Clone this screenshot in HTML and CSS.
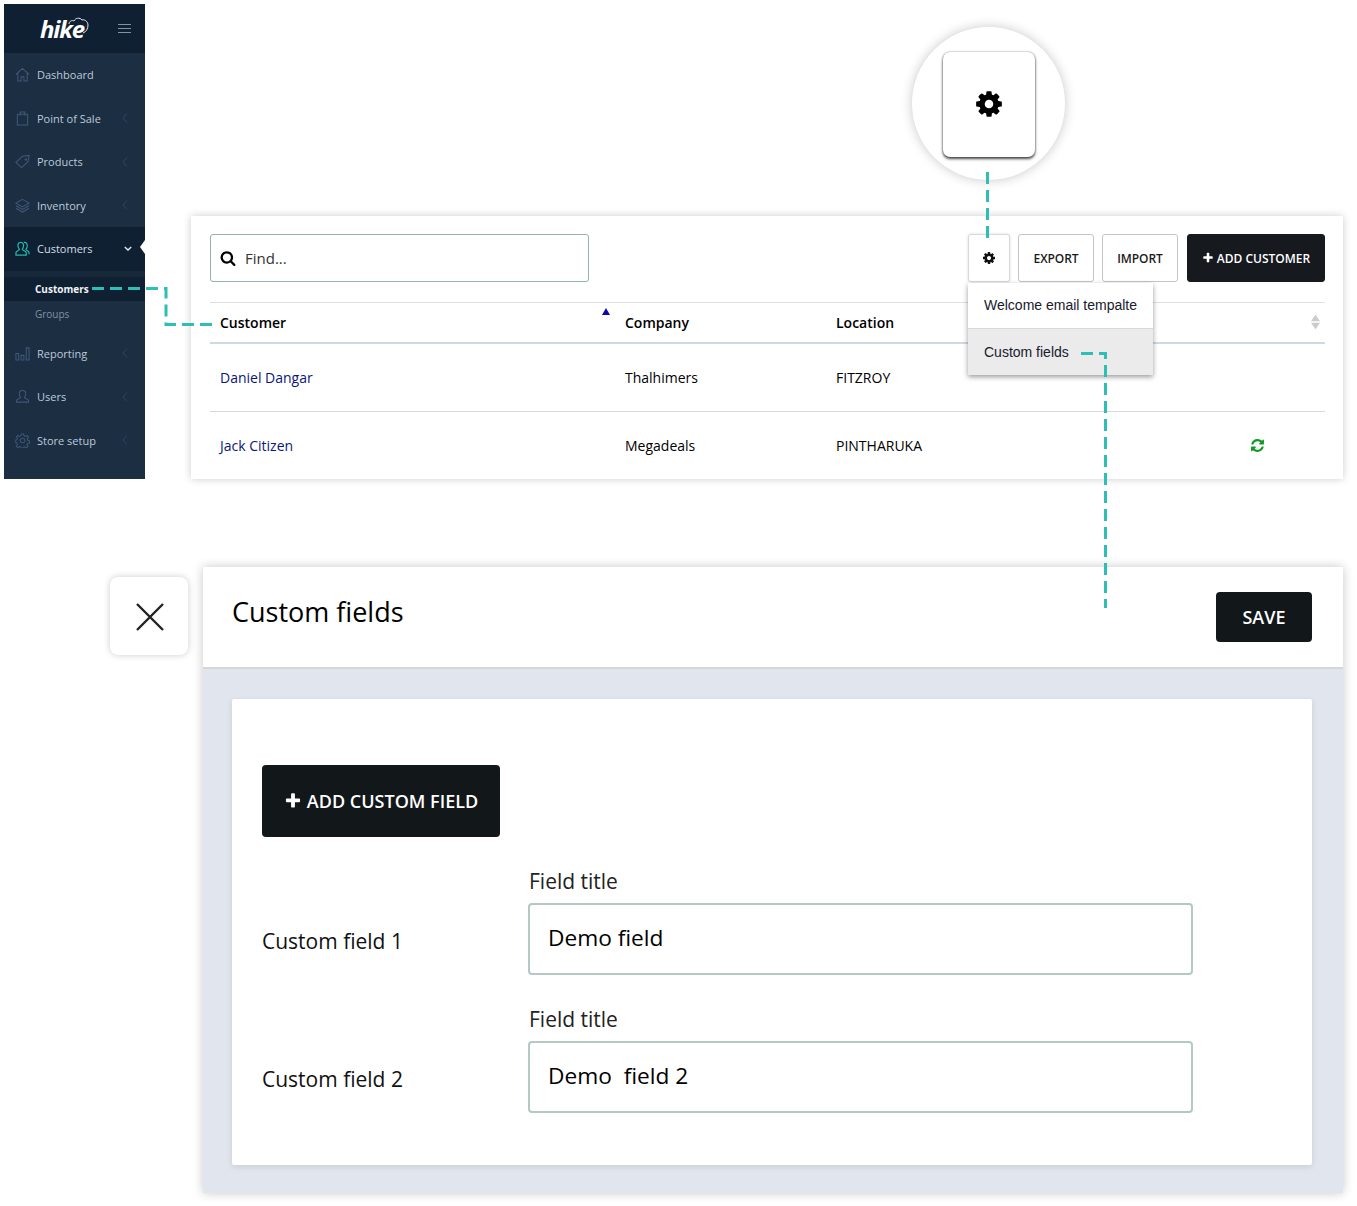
FILE: index.html
```html
<!DOCTYPE html>
<html lang="en">
<head>
    <meta charset="UTF-8">
    <meta name="viewport" content="width=device-width, initial-scale=1.0">
    <title>Custom fields</title>
    <link rel="stylesheet" href="styles.css">
</head>
<body>
    <svg class="defs" width="0" height="0">
        <symbol id="i-cog" viewBox="0 0 1792 1792"><path d="M1152 896q0-106-75-181t-181-75-181 75-75 181 75 181 181 75 181-75 75-181zm512-109v222q0 12-8 23t-20 13l-185 28q-19 54-39 91 35 50 107 138 10 12 10 25t-9 23q-27 37-99 108t-94 71q-12 0-26-9l-138-108q-44 23-91 38-16 136-29 186-7 28-36 28h-222q-14 0-24.500-8.500t-11.500-21.500l-28-184q-49-16-90-37l-141 107q-10 9-25 9-14 0-25-11-126-114-165-168-7-10-7-23 0-12 8-23 15-21 51-66.500t54-70.500q-27-50-41-99l-183-27q-13-2-21-12.500t-8-23.500v-222q0-12 8-23t19-13l186-28q14-46 39-92-40-57-107-138-10-12-10-24 0-10 9-23 26-36 98.500-107.500t94.500-71.500q13 0 26 10l138 107q44-23 91-38 16-136 29-186 7-28 36-28h222q14 0 24.500 8.500t11.500 21.500l28 184q49 16 90 37l142-107q9-9 24-9 13 0 25 10 129 119 165 170 7 8 7 22 0 12-8 23-15 21-51 66.500t-54 70.500q26 50 41 98l183 28q13 2 21 12.500t8 23.500z"/></symbol>
        <symbol id="i-search" viewBox="0 0 1792 1792"><path d="M1216 832q0-185-131.500-316.500t-316.500-131.500-316.500 131.500-131.500 316.500 131.500 316.500 316.500 131.500 316.500-131.500 131.500-316.500zm512 832q0 52-38 90t-90 38q-54 0-90-38l-343-342q-179 124-399 124-143 0-273.500-55.500t-225-150-150-225-55.500-273.500 55.500-273.500 150-225 225-150 273.500-55.500 273.500 55.500 225 150 150 225 55.500 273.500q0 220-124 399l343 343q37 37 37 90z"/></symbol>
        <symbol id="i-refresh" viewBox="0 0 1792 1792"><path d="M1639 1056q0 5-1 7-64 268-268 434.500t-478 166.500q-146 0-282.500-55t-243.500-157l-129 129q-19 19-45 19t-45-19-19-45v-448q0-26 19-45t45-19h448q26 0 45 19t19 45-19 45l-137 137q71 66 161 102t187 36q134 0 250-65t186-179q11-17 53-117 8-23 30-23h192q13 0 22.500 9.500t9.500 22.500zm25-800v448q0 26-19 45t-45 19h-448q-26 0-45-19t-19-45 19-45l138-138q-148-137-349-137-134 0-250 65t-186 179q-11 17-53 117-8 23-30 23h-199q-13 0-22.500-9.500t-9.500-22.500v-7q65-268 270-434.500t480-166.500q146 0 284 55.500t245 156.500l130-129q19-19 45-19t45 19 19 45z"/></symbol>
        <symbol id="i-plus" viewBox="0 0 1792 1792"><path d="M1600 736v192q0 40-28 68t-68 28h-416v416q0 40-28 68t-68 28h-192q-40 0-68-28t-28-68v-416h-416q-40 0-68-28t-28-68v-192q0-40 28-68t68-28h416v-416q0-40 28-68t68-28h192q40 0 68 28t28 68v416h416q40 0 68 28t28 68z"/></symbol>
        <symbol id="i-left" viewBox="0 0 8 12"><path d="M6 1.500 2 6l4 4.500" fill="none" stroke="currentColor" stroke-width="1"/></symbol>
    </svg>

    <!-- sidebar -->
    <nav class="sidebar">
        <div class="side-head">
            <div class="logo">
                <span class="logo-text">hike</span>
                <svg class="logo-cloud" viewBox="0 0 24 20" width="24" height="20"><path d="M3 9c0-3 3-4 5-3 1-3 6-4 8-1 3-1 6 2 6 5 0 4-2 7-5 8" fill="none" stroke="#dfe5ea" stroke-width="1"/></svg>
            </div>
            <div class="burger"><span></span><span></span><span></span></div>
        </div>
        <a class="nav-item">
            <svg class="nav-icon" viewBox="0 0 16 16"><path d="M1 8 8 1.500 15 8M3 6.500V15h3.500v-4.500h3V15H13V6.500"/></svg>
            <span class="nav-label">Dashboard</span>
        </a>
        <a class="nav-item">
            <svg class="nav-icon" viewBox="0 0 16 16"><path d="M2.500 3.500h11V15h-11zM5.500 5V1h5v4"/></svg>
            <span class="nav-label">Point of Sale</span>
            <svg class="nav-arrow"><use href="#i-left"/></svg>
        </a>
        <a class="nav-item">
            <svg class="nav-icon" viewBox="0 0 16 16"><path d="M1 9 8 2.500l7-1-1 6.500-7 6.500zM11.500 5a.8.8 0 1 0 .1 0"/></svg>
            <span class="nav-label">Products</span>
            <svg class="nav-arrow"><use href="#i-left"/></svg>
        </a>
        <a class="nav-item">
            <svg class="nav-icon" viewBox="0 0 16 16"><path d="M8 1.500 15 5.500 8 9.500 1 5.500zM1 8.200l7 4 7-4M1 11l7 4 7-4"/></svg>
            <span class="nav-label">Inventory</span>
            <svg class="nav-arrow"><use href="#i-left"/></svg>
        </a>
        <a class="nav-item active">
            <svg class="nav-icon" viewBox="0 0 16 16"><path d="M6 1.500c2.500 0 3.500 2 3 4.500-.3 1.500-1 2.500-1.300 3 .3 1 4.300 1.500 4.300 3.500V15H1v-2.500c0-2 3.500-2.500 3.800-3.500C4.500 8.500 3.500 7.500 3.300 6 2.800 3.500 3.500 1.500 6 1.500zM9.500 1.500c2.500-.5 4 1.500 3.500 4.500-.2 1.500-1 2.500-1.300 3 .3 1 3.300 1.500 3.300 3.500V14"/></svg>
            <span class="nav-label">Customers</span>
            <svg class="nav-down" viewBox="0 0 10 6"><path d="M1 1l4 4 4-4"/></svg>
            <span class="nav-notch"></span>
        </a>
        <div class="subnav">
            <a class="sub-item current">Customers</a>
            <a class="sub-item">Groups</a>
        </div>
        <a class="nav-item">
            <svg class="nav-icon" viewBox="0 0 16 16"><path d="M1 8h3v7H1zM6.500 10h3v5h-3zM12 2h3v13h-3z"/></svg>
            <span class="nav-label">Reporting</span>
            <svg class="nav-arrow"><use href="#i-left"/></svg>
        </a>
        <a class="nav-item">
            <svg class="nav-icon" viewBox="0 0 16 16"><path d="M8 1.500c2.800 0 3.800 2 3.300 4.500-.3 1.500-1 2.500-1.300 3 .3 1 4.500 1.500 4.500 3.500V14h-13v-1.500C1.500 10.500 5.700 10 6 9c-.3-.5-1-1.500-1.300-3C4.200 3.500 5.200 1.500 8 1.500z"/></svg>
            <span class="nav-label">Users</span>
            <svg class="nav-arrow"><use href="#i-left"/></svg>
        </a>
        <a class="nav-item">
            <svg class="nav-icon" viewBox="0 0 16 16"><path d="M8 5.500a2.500 2.500 0 1 0 .1 0zM6.800 1h2.400l.4 2 1.500.7 1.800-1 1.500 1.800-1.200 1.700.4 1.600 1.900.6v2.300l-2 .4-.7 1.500 1 1.800-1.800 1.500-1.600-1.200-1.700.5-.5 1.800H6.800l-.5-1.900-1.600-.6-1.700 1.100-1.600-1.700 1.100-1.700-.6-1.600-1.900-.4V7.800l2-.5.6-1.500-1.100-1.700L3 2.500l1.700 1.100 1.600-.7z"/></svg>
            <span class="nav-label">Store setup</span>
            <svg class="nav-arrow"><use href="#i-left"/></svg>
        </a>
    </nav>

    <!-- customers panel -->
    <section class="panel">
        <div class="toolbar">
            <label class="find">
                <svg class="find-icon"><use href="#i-search"/></svg>
                <span>Find...</span>
            </label>
            <div class="actions">
                <button class="btn btn-cog"><svg><use href="#i-cog"/></svg></button>
                <button class="btn">EXPORT</button>
                <button class="btn">IMPORT</button>
                <button class="btn btn-dark"><svg><use href="#i-plus"/></svg>ADD CUSTOMER</button>
            </div>
        </div>
        <div class="row row-head">
            <div class="cell cell-name">Customer<span class="sort-up"></span></div>
            <div class="cell">Company</div>
            <div class="cell">Location</div>
            <div class="cell cell-end"><span class="sort-both"></span></div>
        </div>
        <div class="row row-body">
            <div class="cell cell-name"><a>Daniel Dangar</a></div>
            <div class="cell">Thalhimers</div>
            <div class="cell">FITZROY</div>
            <div class="cell cell-end"></div>
        </div>
        <div class="row row-body last">
            <div class="cell cell-name"><a>Jack Citizen</a></div>
            <div class="cell">Megadeals</div>
            <div class="cell">PINTHARUKA</div>
            <div class="cell cell-end"><svg class="sync"><use href="#i-refresh"/></svg></div>
        </div>
        <ul class="menu">
            <li>Welcome email tempalte</li>
            <li class="hover">Custom fields</li>
        </ul>
    </section>

    <!-- zoomed settings button -->
    <div class="lens">
        <div class="lens-btn"><svg><use href="#i-cog"/></svg></div>
    </div>

    <!-- custom fields modal -->
    <button class="close">
        <svg viewBox="0 0 28 28" width="28" height="28"><path d="M1 1l26 26M27 1 1 27"/></svg>
    </button>
    <section class="modal">
        <header class="modal-head">
            <h1>Custom fields</h1>
            <button class="btn-save">SAVE</button>
        </header>
        <div class="modal-body">
            <div class="card">
                <button class="btn-add"><svg><use href="#i-plus"/></svg>ADD CUSTOM FIELD</button>
                <div class="field">
                    <div class="field-name">Custom field 1</div>
                    <div class="field-main">
                        <div class="field-label">Field title</div>
                        <div class="field-input">Demo field</div>
                    </div>
                </div>
                <div class="field">
                    <div class="field-name">Custom field 2</div>
                    <div class="field-main">
                        <div class="field-label">Field title</div>
                        <div class="field-input">Demo&nbsp; field 2</div>
                    </div>
                </div>
            </div>
        </div>
    </section>

    <!-- dashed connectors -->
    <svg class="links" width="1357" height="1206">
        <path d="M92 288.500H166V324.500H212"/>
        <path d="M987.500 172V238"/>
        <path d="M1081 353.500H1105.500V608"/>
    </svg>
</body>
</html>
```

FILE: styles.css
```css
* {
    box-sizing: border-box;
}
html, body {
    margin: 0;
    padding: 0;
}
body {
    position: relative;
    width: 1357px;
    height: 1206px;
    overflow: hidden;
    background: #fff;
    font-family: "Open Sans", "Noto Sans", sans-serif;
    color: #111;
}
button {
    font-family: inherit;
    cursor: pointer;
}
.defs {
    position: absolute;
}

/* sidebar */
.sidebar {
    position: absolute;
    left: 4px;
    top: 4px;
    width: 141px;
    height: 475px;
    background: #1b2e42;
    color: #bccadb;
    font-size: 11px;
    display: flex;
    flex-direction: column;
}
.side-head {
    height: 49px;
    flex: none;
    background: #0f2032;
    display: flex;
    align-items: center;
    padding: 0 14px 0 36px;
    justify-content: space-between;
}
.logo {
    position: relative;
    width: 50px;
    height: 30px;
}
.logo-text {
    font-style: italic;
    font-weight: 700;
    font-size: 24px;
    line-height: 30px;
    letter-spacing: -1.200px;
    color: #fff;
}
.logo-cloud {
    position: absolute;
    left: 26px;
    top: 1px;
}
.burger {
    width: 13px;
    display: flex;
    flex-direction: column;
    gap: 3px;
}
.burger span {
    height: 1px;
    background: #8492a0;
}
.nav-item {
    position: relative;
    height: 43.500px;
    flex: none;
    display: flex;
    align-items: center;
    padding: 0 16px 0 11px;
}
.nav-icon {
    width: 15px;
    height: 15px;
    margin-right: 7px;
    fill: none;
    stroke: #41577a;
    stroke-width: 1.100;
}
.nav-label {
    flex: 1;
}
.nav-arrow {
    width: 8px;
    height: 12px;
    color: #2f4560;
}
.nav-item.active {
    background: #0f2032;
    color: #d5dde5;
}
.nav-item.active .nav-icon {
    stroke: #1fb9a6;
    stroke-width: 1.300;
}
.nav-down {
    width: 8px;
    height: 5px;
    margin-right: -3px;
    fill: none;
    stroke: #e2e8ee;
    stroke-width: 1.700;
}
.nav-notch {
    position: absolute;
    right: 0;
    top: 13px;
    border: 7px solid transparent;
    border-right: 5px solid #fff;
    border-left: 0;
}
.subnav {
    flex: none;
    height: 61px;
    border-top: 6px solid #16283a;
    font-size: 10px;
}
.sub-item {
    display: block;
    height: 24px;
    line-height: 24px;
    padding-left: 31px;
    color: #8292a5;
}
.sub-item + .sub-item {
    margin-top: 1px;
}
.sub-item.current {
    background: #0f2032;
    color: #f0f3f6;
    font-weight: 700;
}

/* customers panel */
.panel {
    position: absolute;
    left: 191px;
    top: 216px;
    width: 1152px;
    height: 263px;
    background: #fff;
    box-shadow: 0 0 8px rgba(0, 0, 0, 0.2);
    padding: 18px 18px 0 19px;
    font-size: 14px;
}
.toolbar {
    display: flex;
    justify-content: space-between;
    height: 68px;
}
.find {
    width: 379px;
    height: 48px;
    border: 1px solid #94b3b0;
    border-radius: 3px;
    display: flex;
    align-items: center;
    padding-left: 9px;
    gap: 9px;
    color: #333;
    font-size: 15px;
}
.find-icon {
    width: 16px;
    height: 16px;
    fill: #000;
}
.actions {
    display: flex;
    gap: 8px;
}
.btn {
    height: 48px;
    width: 76px;
    padding: 0;
    background: #fff;
    border: 1px solid #c4c4c4;
    border-radius: 3px;
    font-size: 12px;
    font-weight: 600;
    letter-spacing: -0.100px;
    color: #1a1a1a;
}
.btn-cog {
    width: 42px;
    box-shadow: 0 0 3px rgba(0, 0, 0, 0.15);
    border-color: #d8d8d8;
}
.btn-cog svg {
    width: 14px;
    height: 14px;
    display: block;
    margin: 0 auto;
    fill: #111;
}
.btn-dark {
    width: 138px;
    margin-left: 1px;
    background: #16191e;
    border-color: #16191e;
    color: #fff;
    letter-spacing: 0;
    display: flex;
    align-items: center;
    justify-content: center;
    gap: 3px;
}
.btn-dark svg {
    width: 12px;
    height: 12px;
    fill: #fff;
}
.row {
    display: grid;
    grid-template-columns: 405px 211px 1fr 120px;
    align-items: center;
}
.row-head {
    height: 42px;
    border-top: 1px solid #dbe0e4;
    border-bottom: 2px solid #d0d8e2;
    font-weight: 600;
    color: #000;
}
.row-body {
    height: 68px;
    border-bottom: 1px solid #d3d9df;
    color: #000;
}
.row-body.last {
    height: 66px;
    border-bottom: 0;
}
.cell {
    position: relative;
    padding-left: 10px;
}
.cell-name a {
    color: #0a1678;
}
.cell-end {
    text-align: right;
}
.sort-up {
    position: absolute;
    right: 5px;
    top: -5px;
    border: 4px solid transparent;
    border-top: 0;
    border-bottom: 7px solid #0a0aa8;
}
.sort-both {
    position: absolute;
    right: 5px;
    top: -8px;
    width: 9px;
    height: 15px;
    background: #ccc;
    clip-path: polygon(50% 0, 100% 45%, 0 45%, 0 55%, 100% 55%, 50% 100%, 0 55%, 0 45%);
}
.sync {
    display: block;
    width: 15px;
    height: 15px;
    margin: 1px 60px 0 auto;
    fill: #0c9a1f;
}
.menu {
    position: absolute;
    left: 777px;
    top: 67px;
    width: 185px;
    margin: 0;
    padding: 0;
    list-style: none;
    background: #fff;
    box-shadow: 0 2px 5px rgba(0, 0, 0, 0.4);
    font-family: "Liberation Sans", Arial, sans-serif;
    font-size: 14px;
    color: #16202c;
}
.menu li {
    height: 45px;
    line-height: 44px;
    padding-left: 16px;
}
.menu li.hover {
    height: 47px;
    line-height: 46px;
    border-top: 1px solid #d8d8d8;
    background: #ebebeb;
}

/* zoomed button */
.lens {
    position: absolute;
    left: 912px;
    top: 27px;
    width: 153px;
    height: 153px;
    border-radius: 50%;
    background: #fff;
    box-shadow: 0 0 12px rgba(0, 0, 0, 0.22);
    display: flex;
    align-items: center;
    justify-content: center;
}
.lens-btn {
    width: 92px;
    height: 105px;
    background: #fff;
    border-radius: 7px;
    box-shadow: 0 2px 3px rgba(0, 0, 0, 0.7), 0 0 2px rgba(0, 0, 0, 0.45);
    display: flex;
    align-items: center;
    justify-content: center;
    margin: 1px 0 0 1px;
}
.lens-btn svg {
    width: 30px;
    height: 30px;
    fill: #000;
}

/* modal */
.close {
    position: absolute;
    left: 110px;
    top: 577px;
    width: 78px;
    height: 78px;
    padding: 2px 0 0 2px;
    border: 0;
    border-radius: 8px;
    background: #fff;
    box-shadow: 0 0 7px rgba(0, 0, 0, 0.2);
    display: flex;
    align-items: center;
    justify-content: center;
}
.close svg {
    fill: none;
    stroke: #222;
    stroke-width: 2.400;
}
.modal {
    position: absolute;
    left: 203px;
    top: 567px;
    width: 1140px;
    height: 626px;
    background: #e1e5ed;
    box-shadow: 0 0 10px rgba(0, 0, 0, 0.22);
    display: flex;
    flex-direction: column;
}
.modal-head {
    height: 102px;
    flex: none;
    background: #fff;
    border-bottom: 2px solid #d6d6d6;
    display: flex;
    align-items: flex-start;
    justify-content: space-between;
    padding: 25px 31px 0 29px;
}
.modal-head h1 {
    margin: 0;
    font-size: 27px;
    font-weight: 400;
    line-height: 40px;
    color: #000;
}
.btn-save {
    width: 96px;
    height: 50px;
    background: #12171a;
    color: #fff;
    border: 0;
    border-radius: 4px;
    font-size: 18px;
    font-weight: 600;
}
.modal-body {
    padding: 30px 31px 28px 29px;
    flex: 1;
    display: flex;
}
.card {
    flex: 1;
    background: #fff;
    border-radius: 2px;
    box-shadow: 0 2px 6px rgba(0, 0, 0, 0.1);
    padding: 66px 30px 0 30px;
}
.btn-add {
    width: 238px;
    height: 72px;
    background: #12171a;
    color: #fff;
    border: 0;
    border-radius: 4px;
    font-size: 18px;
    font-weight: 600;
    display: flex;
    align-items: center;
    justify-content: center;
    gap: 5px;
    margin-bottom: 28px;
}
.btn-add svg {
    width: 18px;
    height: 18px;
    fill: #fff;
}
.field {
    display: flex;
    align-items: flex-end;
    height: 110px;
    margin-bottom: 28px;
}
.field-name {
    width: 266px;
    height: 72px;
    line-height: 77px;
    font-size: 21px;
    color: #111;
}
.field-main {
    width: 665px;
}
.field-label {
    height: 38px;
    line-height: 33px;
    padding-left: 1px;
    font-size: 21px;
    color: #222;
}
.field-input {
    height: 72px;
    border: 2px solid #b5c8c6;
    border-radius: 4px;
    padding-left: 18px;
    line-height: 66px;
    font-size: 22.700px;
    color: #000;
}

/* connectors */
.links {
    position: absolute;
    left: 0;
    top: 0;
    pointer-events: none;
}
.links path {
    fill: none;
    stroke: #2dbfb6;
    stroke-width: 3;
    stroke-dasharray: 12 6;
}
```
